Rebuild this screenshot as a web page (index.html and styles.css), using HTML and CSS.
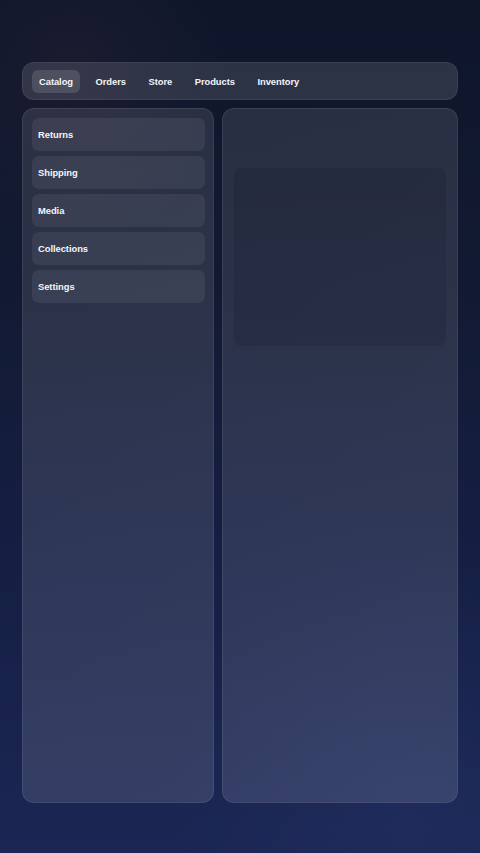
FILE: index.html
```html
<!DOCTYPE html>
<html lang="en">
<head>
<meta charset="utf-8">
<title>Catalog</title>
<link rel="stylesheet" href="styles.css">
</head>
<body>
<div class="page">
  <nav class="topnav">
    <span class="tab active">Catalog</span>
    <span class="tab">Orders</span>
    <span class="tab">Store</span>
    <span class="tab">Products</span>
    <span class="tab">Inventory</span>
  </nav>
  <div class="main">
    <aside class="sidebar">
      <div class="item">Returns</div>
      <div class="item">Shipping</div>
      <div class="item">Media</div>
      <div class="item">Collections</div>
      <div class="item">Settings</div>
    </aside>
    <section class="content">
      <div class="placeholder"></div>
    </section>
  </div>
</div>
</body>
</html>
```
FILE: styles.css
```css
html, body {
  margin: 0;
  padding: 0;
  height: 100%;
}
body {
  font-family: "Liberation Sans", Arial, sans-serif;
  color: #f3f5fa;
  background:
    radial-gradient(ellipse 45% 30% at 15% 8%, rgba(45, 35, 55, 0.35), rgba(45, 35, 55, 0) 70%),
    radial-gradient(ellipse 70% 45% at 85% 95%, rgba(40, 55, 110, 0.3), rgba(40, 55, 110, 0) 70%),
    linear-gradient(to bottom, #0f162a 0%, #121a33 35%, #151f43 65%, #1b2654 100%);
  overflow: hidden;
}
.page {
  box-sizing: border-box;
  height: 853px;
  padding: 62px 22px 50px;
  display: flex;
  flex-direction: column;
  gap: 8px;
}
.topnav {
  box-sizing: border-box;
  height: 38px;
  display: flex;
  align-items: center;
  gap: 8.5px;
  padding: 0 9px;
  border-radius: 12px;
  background: rgba(255, 255, 255, 0.12);
  border: 1px solid rgba(255, 255, 255, 0.07);
}
.tab {
  font-size: 9.4px;
  letter-spacing: -0.05px;
  font-weight: 700;
  padding: 0 7px;
  height: 23px;
  line-height: 24px;
  border-radius: 6px;
}
.tab.active {
  background: rgba(255, 255, 255, 0.13);
}
.main {
  flex: 1;
  display: flex;
  gap: 8px;
}
.sidebar, .content {
  box-sizing: border-box;
  border-radius: 12px;
  background: linear-gradient(135deg, rgba(255, 255, 255, 0.1), rgba(255, 255, 255, 0.12));
  border: 1px solid rgba(255, 255, 255, 0.08);
}
.sidebar {
  width: 192px;
  padding: 9px 8px 9px 9px;
  display: flex;
  flex-direction: column;
  gap: 5px;
}
.item {
  height: 33px;
  box-sizing: border-box;
  padding: 0 6px;
  display: flex;
  align-items: center;
  font-size: 9.4px;
  letter-spacing: -0.05px;
  font-weight: 700;
  border-radius: 7px;
  background: rgba(255, 255, 255, 0.065);
}
.content {
  flex: 1;
  padding: 59px 11px 0;
}
.placeholder {
  height: 178px;
  border-radius: 8px;
  background: rgba(12, 16, 32, 0.15);
}
```
